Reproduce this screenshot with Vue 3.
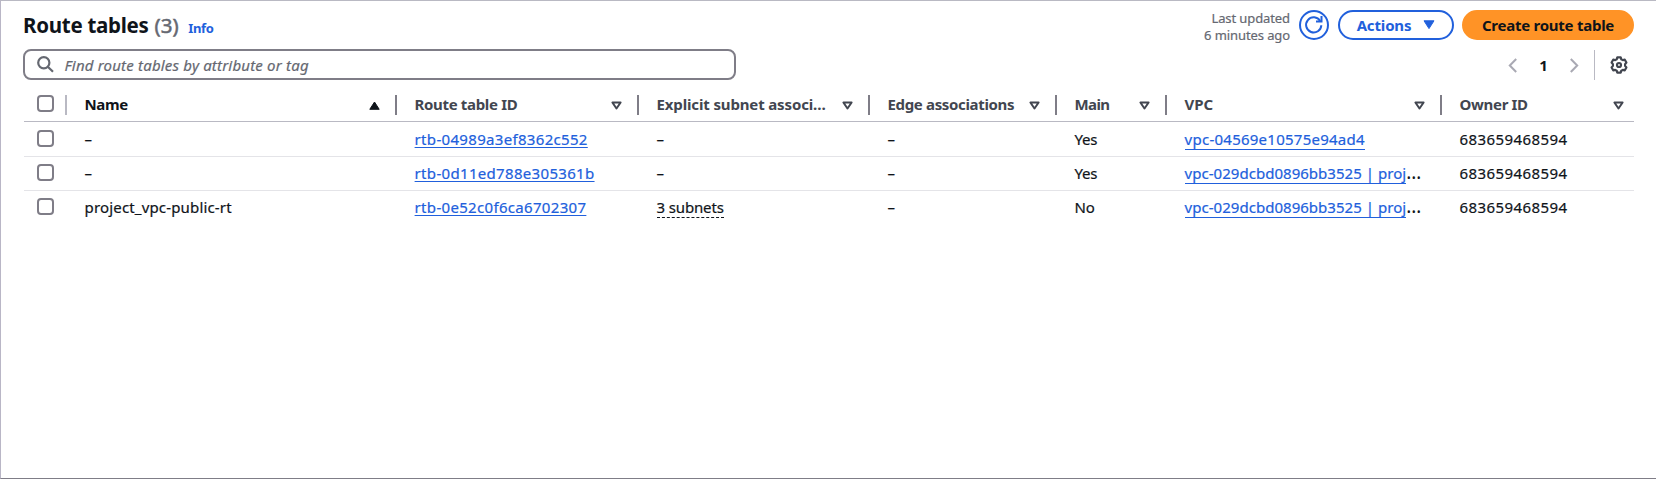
<script setup>
const columns = [
  { key: 'name', label: 'Name', sorted: true },
  { key: 'id', label: 'Route table ID' },
  { key: 'subnets', label: 'Explicit subnet associ…' },
  { key: 'edge', label: 'Edge associations' },
  { key: 'main', label: 'Main' },
  { key: 'vpc', label: 'VPC' },
  { key: 'owner', label: 'Owner ID' }
]
const rows = [
  { name: '–', id: 'rtb-04989a3ef8362c552', subnets: '–', main: 'Yes', vpc: 'vpc-04569e10575e94ad4', more: '' },
  { name: '–', id: 'rtb-0d11ed788e305361b', subnets: '–', main: 'Yes', vpc: 'vpc-029dcbd0896bb3525 | proj', more: '…' },
  { name: 'project_vpc-public-rt', id: 'rtb-0e52c0f6ca6702307', subnets: '3 subnets', main: 'No', vpc: 'vpc-029dcbd0896bb3525 | proj', more: '…' }
]
</script>

<template>
  <main class="panel">
    <header class="top">
      <h1 class="title"><span class="title-text">Route tables</span><span class="count">(3)</span><a class="info">Info</a></h1>
      <div class="actions">
        <p class="updated"><span>Last updated</span><span>6 minutes ago</span></p>
        <button class="btn refresh" aria-label="Refresh">
          <svg width="20" height="20" viewBox="0 0 20 20" fill="none" stroke="currentColor" stroke-width="2">
            <path d="M17.3 10.2A7.6 7.6 0 1 1 16.2 6" />
            <path d="M17.5 1V6.5H12" />
          </svg>
        </button>
        <button class="btn menu"><span class="menu-text">Actions</span>
          <svg width="12" height="10" viewBox="0 0 12 10"><path d="M1 .8H11L6 8.6Z" fill="currentColor" stroke="currentColor" stroke-linejoin="round" /></svg>
        </button>
        <button class="btn primary"><span class="primary-text">Create route table</span></button>
      </div>
    </header>

    <div class="tools">
      <div class="search">
        <svg width="17" height="17" viewBox="0 0 17 17" fill="none" stroke="currentColor" stroke-width="2.2">
          <circle cx="6.8" cy="6.8" r="5.6" /><path d="M10.8 10.8L16 15.8" />
        </svg>
        <span class="placeholder">Find route tables by attribute or tag</span>
      </div>
      <nav class="pager">
        <svg class="prev" width="10" height="15" viewBox="0 0 10 15"><path d="M8.2 1L1.8 7.5L8.2 14" fill="none" stroke="currentColor" stroke-width="2" /></svg>
        <span class="page">1</span>
        <svg class="next" width="10" height="15" viewBox="0 0 10 15"><path d="M1.8 1L8.2 7.5L1.8 14" fill="none" stroke="currentColor" stroke-width="2" /></svg>
        <i class="rule"></i>
        <svg class="gear" width="18" height="18" viewBox="0 0 18 18" fill="none" stroke="currentColor" stroke-width="2.2" stroke-linejoin="round">
          <path d="M7.3 1.4H10.7L11.3 3.3L12.8 4.1L14.8 3.7L16.4 6.5L15.1 8.1V9.9L16.4 11.5L14.8 14.3L12.8 13.9L11.3 14.7L10.7 16.6H7.3L6.7 14.7L5.2 13.9L3.2 14.3L1.6 11.5L2.9 9.9V8.1L1.6 6.5L3.2 3.7L5.2 4.1L6.7 3.3Z" />
          <circle cx="9" cy="9" r="2" />
        </svg>
      </nav>
    </div>

    <section class="table">
      <div class="row head">
        <div class="check"><i class="box"></i></div>
        <div v-for="c in columns" :key="c.key" class="cell" :class="{ sorted: c.sorted }">
          <span class="label" :class="'h-' + c.key">{{ c.label }}</span>
          <svg v-if="c.sorted" width="11" height="9" viewBox="0 0 11 9"><path d="M.8 8.3H10.2L5.5 1Z" fill="currentColor" stroke="currentColor" stroke-linejoin="round" /></svg>
          <svg v-else width="11" height="9" viewBox="0 0 11 9"><path d="M1.4 1.5H9.6L5.5 7.5Z" fill="none" stroke="currentColor" stroke-width="2" stroke-linejoin="round" /></svg>
        </div>
      </div>
      <div v-for="r in rows" :key="r.id" class="row body">
        <div class="check"><i class="box"></i></div>
        <div class="cell"><span :class="r.name === '–' ? 'dash' : 'name'">{{ r.name }}</span></div>
        <div class="cell"><a class="rtb">{{ r.id }}</a></div>
        <div class="cell"><span :class="r.subnets === '–' ? 'dash' : 'subnets'">{{ r.subnets }}</span></div>
        <div class="cell"><span class="dash">–</span></div>
        <div class="cell"><span class="main">{{ r.main }}</span></div>
        <div class="cell"><a class="vpc" :class="{ cut: r.more }">{{ r.vpc }}</a><span class="more">{{ r.more }}</span></div>
        <div class="cell"><span class="owner">683659468594</span></div>
      </div>
    </section>
  </main>
</template>

<style>
body { margin: 0; background: #fff; }
</style>

<style scoped>
* { box-sizing: border-box; }
.panel {
  width: 1656px; height: 479px; overflow: hidden; background: #fff;
  border-top: 1px solid #b9b9c3; border-left: 1px solid #b9b6c6; border-bottom: 1px solid #7f7d87;
  padding: 9px 22px 0 22px; color: #0f141a;
  font-family: "Noto Sans", "Open Sans", sans-serif; font-size: 15px; line-height: 20px; white-space: nowrap;
}
.top { display: flex; justify-content: space-between; height: 30px; }
.title { margin: 0; display: flex; align-items: baseline; font-size: 20.5px; line-height: 30px; font-weight: 700; }
.title-text { letter-spacing: -.27px; }
.count { margin-left: 6px; font-weight: 400; color: #656871; -webkit-text-stroke: .5px; }
.info { margin-left: 9.5px; font-size: 13px; font-weight: 700; letter-spacing: -.3px; color: #2160dc; }
.actions { display: flex; }
.updated { margin: 0 9px 0 0; display: flex; flex-direction: column; align-items: flex-end; font-size: 13px; line-height: 17px; letter-spacing: -.1px; color: #656871; -webkit-text-stroke: .2px; }
.btn { height: 30px; padding: 0; margin: 0; border: 2px solid #2160dc; border-radius: 15px; background: #fff; color: #2160dc; font: inherit; font-weight: 700; display: flex; align-items: center; justify-content: center; }
.refresh { width: 30px; margin-right: 9px; }
.menu { width: 116px; margin-right: 8px; gap: 12px; }
.menu-text { letter-spacing: -.15px; }
.primary { width: 172px; background: #ff9326; border-color: #ff9326; color: #0f141a; }
.primary-text { letter-spacing: -.25px; }

.tools { display: flex; justify-content: space-between; margin-top: 9px; height: 31px; }
.search { width: 713px; height: 31px; border: 2px solid #7f7d87; border-radius: 8px; display: flex; align-items: center; padding-left: 12px; gap: 10.5px; color: #656871; }
.placeholder { font-style: italic; letter-spacing: .19px; -webkit-text-stroke: .2px; }
.pager { display: flex; align-items: center; height: 30px; margin-top: 1px; padding-right: 6px; }
.prev, .next { color: #a9a9b3; }
.page { width: 51px; text-align: center; font-weight: 700; }
.rule { width: 1px; height: 30px; margin: 0 15px; background: #b9b9c3; }
.gear { color: #424650; }

.table { margin: 5px 0 0 1px; width: 1610px; }
.row { display: grid; grid-template-columns: 43px 330px 242px 231px 187px 110px 275px 192px; }
.head { height: 37px; border-bottom: 1px solid #b9b9c3; font-weight: 700; color: #424650; }
.body { height: 34px; border-bottom: 1px solid #e4e4e8; -webkit-text-stroke: .2px; }
.body:nth-child(2) { height: 35px; }
.body:last-child { border-bottom: 0; }
.check { padding: 8px 0 0 13px; }
.head .check, .head .cell:not(:last-child) { background: linear-gradient(#7f7d87, #7f7d87) right 10px / 2px 20px no-repeat; }
.head .check { background-image: linear-gradient(#b9b9c3, #b9b9c3); padding-top: 10px; }
.body:nth-child(n+3) .check { padding-top: 7px; }
.box { display: block; width: 17px; height: 17px; border: 2px solid #7f7d87; border-radius: 4px; }
.cell { padding: 7px 0 0 17.6px; min-width: 0; }
.body:nth-child(n+3) .cell { padding-top: 6px; }
.head .cell { display: flex; justify-content: space-between; align-items: flex-start; padding: 9px 17px 0 17.5px; }
.head .cell:last-child { padding-right: 10px; }
.head .cell svg { margin-top: 7px; }
.sorted { color: #0f141a; }
.head .sorted { color: #0f141a; }
.h-name { letter-spacing: -.35px; }
.h-id { letter-spacing: -.33px; }
.h-subnets { letter-spacing: -.14px; }
.h-edge { letter-spacing: -.34px; }
.h-main { letter-spacing: -.6px; }
.h-owner { letter-spacing: -.32px; }
.name { letter-spacing: .16px; }
.rtb { color: #2160dc; letter-spacing: .32px; text-decoration: underline 1px; text-underline-offset: 2px; }
.vpc { display: inline-block; height: 21px; border-bottom: 1px solid #2160dc; color: #2160dc; letter-spacing: .25px; }
.vpc.cut { letter-spacing: .03px; }
.more { font-size: 19px; line-height: 0; -webkit-text-stroke: 0; }
.main { letter-spacing: -.3px; }
.owner { letter-spacing: .42px; }
.subnets { display: inline-block; height: 21px; border-bottom: 1px dashed #0f141a; letter-spacing: -.15px; }
</style>
